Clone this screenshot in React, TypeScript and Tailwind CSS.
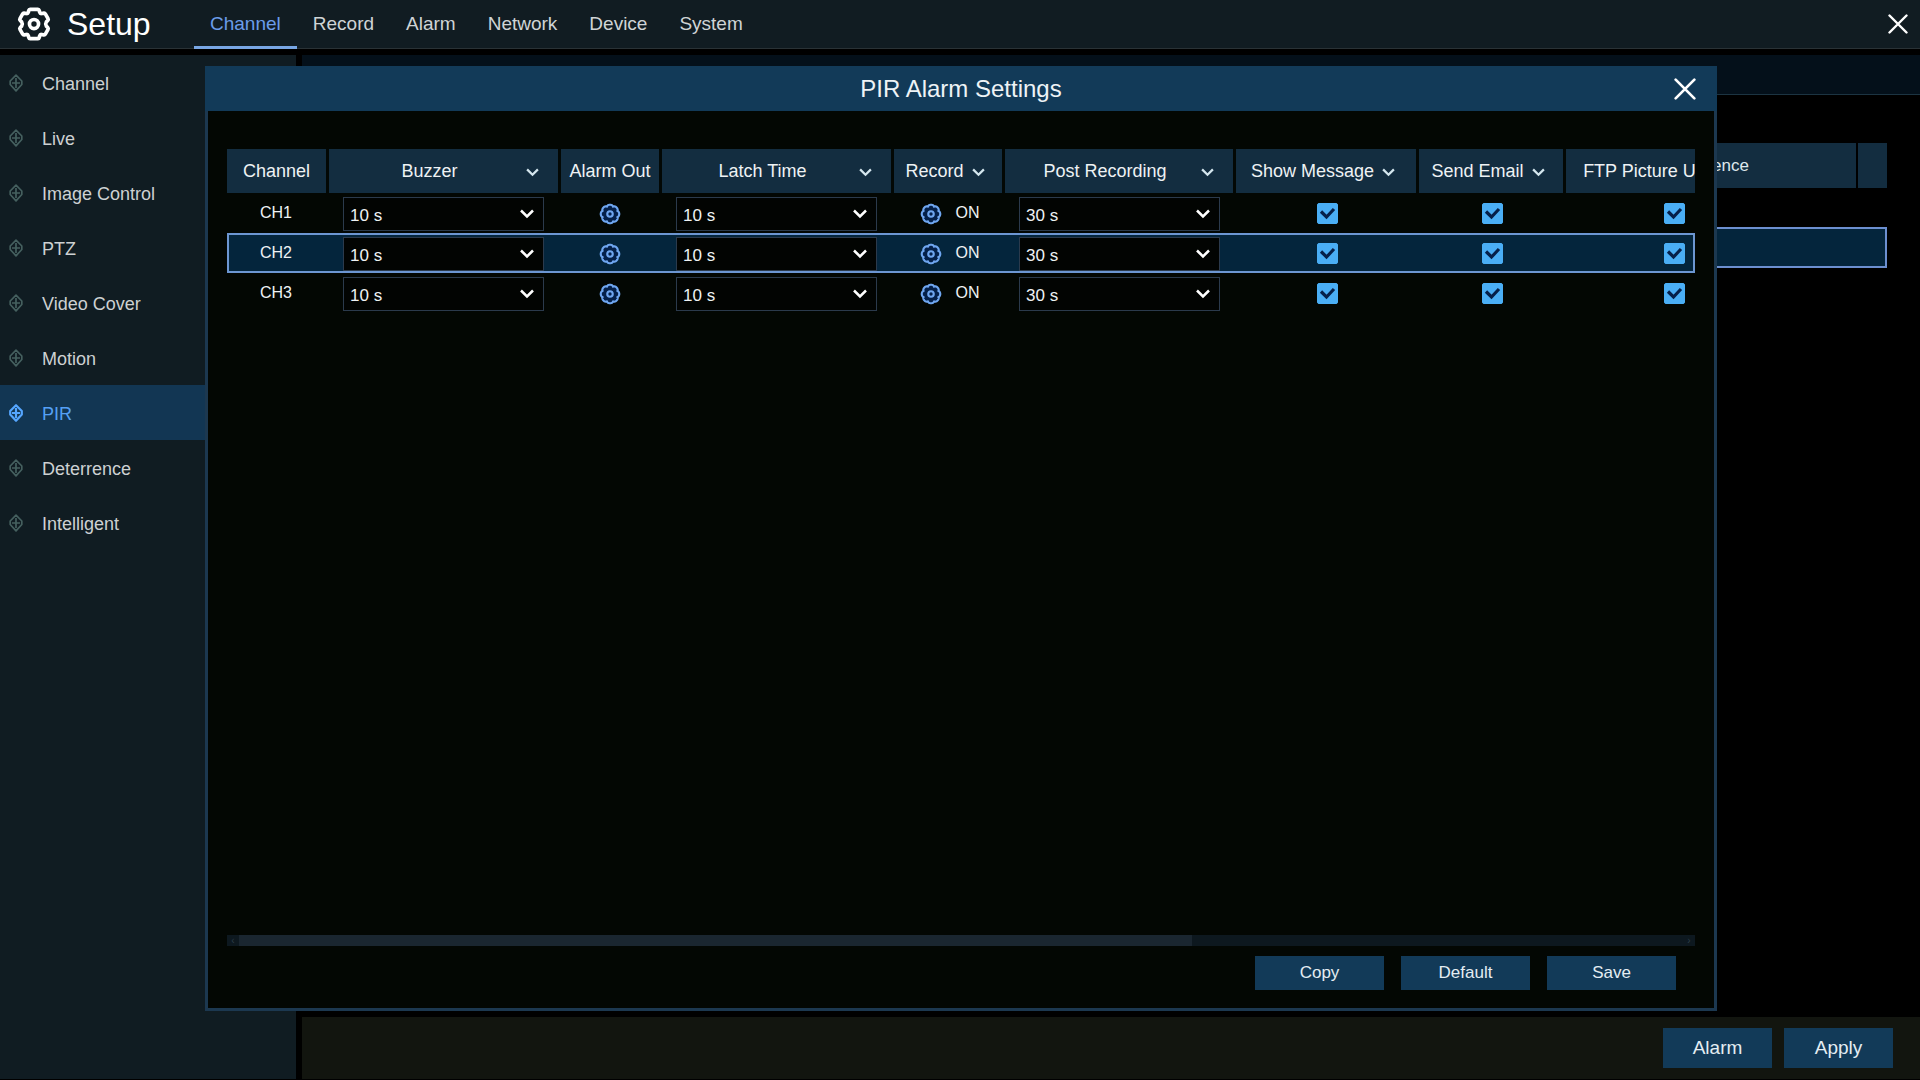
import { useState } from 'react';
import type { ReactNode } from 'react';

const TABS = ['Channel', 'Record', 'Alarm', 'Network', 'Device', 'System'];
const SIDE = ['Channel', 'Live', 'Image Control', 'PTZ', 'Video Cover', 'Motion', 'PIR', 'Deterrence', 'Intelligent'];
const CHANNELS = ['CH1', 'CH2', 'CH3'];

// Closed outline with rounded lobes and narrow notches between them.
function lobedPath(lobes: number, inner: number, depth: number) {
  const pts: string[] = [];
  for (let i = 0; i < 144; i++) {
    const a = (i / 144) * Math.PI * 2;
    const d = inner + depth * Math.sqrt(Math.abs(Math.cos((lobes / 2) * a)));
    pts.push((12 + d * Math.sin(a)).toFixed(2) + ' ' + (12 - d * Math.cos(a)).toFixed(2));
  }
  return 'M' + pts.join('L') + 'Z';
}

const GEAR_PATH = lobedPath(8, 8.6, 1.5);

function SetupIcon() {
  return (
    <svg viewBox="0 0 24 24" className="size-[34px]" fill="none" stroke="#fff" strokeWidth="2.6" strokeLinejoin="round" aria-hidden="true">
      <path d="M9.200 1.700h5.600q.7 0 .9.800l.3 1.200q.3 1 1.300.9l1.500-.3q.8-.2 1.200.5l1.900 3.400q.4.700-.2 1.300l-1 1q-.9 1.500 0 3l1 1q.6.600.2 1.300l-1.900 3.400q-.4.700-1.200.5l-1.500-.3q-1-.1-1.300.9l-.3 1.200q-.2.800-.9.800H9.200q-.7 0-.9-.8L8 20.300q-.3-1-1.300-.9l-1.500.3q-.8.2-1.200-.5l-1.900-3.400q-.4-.7.2-1.300l1-1q.9-1.500 0-3l-1-1q-.6-.6-.2-1.300L4 4.800q.4-.7 1.200-.5l1.500.3Q7.700 4.700 8 3.700l.3-1.200q.2-.8.900-.8z" />
      <circle cx="12" cy="12" r="3.2" />
    </svg>
  );
}

function Gear() {
  return (
    <svg viewBox="0 0 24 24" className="size-[22px]" fill="#04204a" stroke="#6fa6f0" strokeWidth="2.3" strokeLinejoin="round" aria-hidden="true">
      <path d={GEAR_PATH} />
      <circle cx="12" cy="12" r="3" />
    </svg>
  );
}

function Diamond({ active }: { active: boolean }) {
  return (
    <svg viewBox="0 0 14 18" className="h-[18px] w-[14px]" fill="none" stroke={active ? '#55a6ff' : '#45605f'} strokeWidth={active ? 2.2 : 1.7} strokeLinejoin="round" aria-hidden="true">
      <path d="M7 1.2 12.8 7v3.5L7 16.8 1.2 10.500V7z" />
      <path d="M7 4v10M3 9h8" />
    </svg>
  );
}

function Cross({ className }: { className: string }) {
  return (
    <svg viewBox="0 0 20 20" className={className} fill="none" stroke="#fff" strokeWidth="2.4" strokeLinecap="round" aria-hidden="true">
      <path d="M1.500 1.500l17 17M18.500 1.500l-17 17" />
    </svg>
  );
}

function Chevron({ className }: { className: string }) {
  return (
    <svg viewBox="0 0 14 10" className={className} fill="none" stroke="currentColor" strokeWidth="2.5" aria-hidden="true">
      <path d="M1 1.500l6 6 6-6" />
    </svg>
  );
}

function Picker({ label, value }: { label: string; value: string }) {
  return (
    <div className="relative mt-0.5 ml-3.5 h-[34px] w-[201px]">
      <select aria-label={label} defaultValue={value} className="h-full w-full appearance-none border border-[#2b3a4c] bg-[#020402] px-1.5 pt-1 text-[17px] text-[#eef2f4] outline-none">
        <option>{value}</option>
        <option>60 s</option>
      </select>
      <Chevron className="pointer-events-none absolute top-3 right-2.5 h-2.5 w-3.5 text-white" />
    </div>
  );
}

function Tick({ label }: { label: string }) {
  const [on, setOn] = useState(true);
  return (
    <label className="relative mx-auto block size-[21px]">
      <input type="checkbox" aria-label={label} checked={on} onChange={() => setOn(!on)} className="block size-full appearance-none rounded-xs border border-[#4aaef5] checked:bg-[#4aaef5]" />
      {on && (
        <svg viewBox="0 0 21 21" className="pointer-events-none absolute inset-0 size-full" fill="none" stroke="#06204a" strokeWidth="3.2" aria-hidden="true">
          <path d="M4 8.500l5.500 5.500 7.500-8" />
        </svg>
      )}
    </label>
  );
}

function Head({ label, menu }: { label: string; menu?: 'wide' | 'tight' }) {
  return (
    <th scope="col" className="h-11 border-r-[3px] border-[#030805] bg-[#132d40] bg-clip-padding p-0 font-normal whitespace-nowrap">
      {menu === 'wide' && (
        <button type="button" className="grid w-full grid-cols-[1fr_38px] items-center">
          <span className="pl-2.5">{label}</span>
          <Chevron className="mt-0.5 ml-1.5 h-[9px] w-[13px] text-[#d4e6ee]" />
        </button>
      )}
      {menu === 'tight' && (
        <button type="button" className="flex w-full items-center justify-center gap-2 pr-1.5">
          <span>{label}</span>
          <Chevron className="mt-0.5 h-[9px] w-[13px] text-[#d4e6ee]" />
        </button>
      )}
      {!menu && label}
    </th>
  );
}

function Action({ children, large }: { children: ReactNode; large?: boolean }) {
  return (
    <button type="button" className={large ? 'h-10 w-[109px] bg-[#123a58] text-[19px] text-[#e4edf2]' : 'h-[34px] w-[129px] bg-[#123a58] text-[17px] text-[#e4edf2]'}>
      {children}
    </button>
  );
}

function AlarmTable() {
  const [selected, setSelected] = useState('CH2');
  return (
    <table className="w-[1560px] table-fixed border-separate border-spacing-0 text-[#eef2f4]">
      <colgroup>
        <col className="w-[102px]" />
        <col className="w-[232px]" />
        <col className="w-[101px]" />
        <col className="w-[232px]" />
        <col className="w-[111px]" />
        <col className="w-[231px]" />
        <col className="w-[183px]" />
        <col className="w-[147px]" />
        <col className="w-[221px]" />
      </colgroup>
      <thead className="text-[18px]">
        <tr>
          <Head label="Channel" />
          <Head label="Buzzer" menu="wide" />
          <Head label="Alarm Out" />
          <Head label="Latch Time" menu="wide" />
          <Head label="Record" menu="tight" />
          <Head label="Post Recording" menu="wide" />
          <Head label="Show Message" menu="tight" />
          <Head label="Send Email" menu="tight" />
          <Head label="FTP Picture Upload" menu="tight" />
        </tr>
      </thead>
      <tbody>
        {CHANNELS.map((ch) => {
          const cell = selected === ch ? 'h-10 border-y-2 border-[#6c96d2] bg-[#04253c] p-0' : 'h-10 p-0';
          return (
            <tr key={ch} onClick={() => setSelected(ch)}>
              <td className={cell + ' pr-1 text-center text-base'}>{ch}</td>
              <td className={cell}><Picker label={ch + ' buzzer'} value="10 s" /></td>
              <td className={cell + ' pr-1'}>
                <button type="button" aria-label={ch + ' alarm out'} className="mx-auto mt-0.5 block"><Gear /></button>
              </td>
              <td className={cell}><Picker label={ch + ' latch time'} value="10 s" /></td>
              <td className={cell}>
                <div className="flex items-center justify-center gap-3.5">
                  <button type="button" aria-label={ch + ' record'} className="mt-0.5"><Gear /></button>
                  <span className="text-base">ON</span>
                </div>
              </td>
              <td className={cell}><Picker label={ch + ' post recording'} value="30 s" /></td>
              <td className={cell}><Tick label={ch + ' show message'} /></td>
              <td className={cell}><Tick label={ch + ' send email'} /></td>
              <td className={cell + ' pr-1'}><Tick label={ch + ' FTP picture upload'} /></td>
            </tr>
          );
        })}
      </tbody>
    </table>
  );
}

export default function App() {
  return (
    <div className="relative flex h-screen flex-col overflow-hidden bg-black pb-px font-['Liberation_Sans',Arial,sans-serif]">
      <header className="flex h-[49px] shrink-0 items-stretch border-b border-[#2a3236] bg-[#111c22]">
        <h1 className="flex w-[194px] items-center gap-4 pl-[17px] text-[32px] leading-none text-white">
          <SetupIcon />
          <span>Setup</span>
        </h1>
        <nav className="flex text-[19px] text-[#cfd4d6]">
          {TABS.map((t, i) => (
            <a key={t} href="#" className={i === 0 ? '-mb-px flex items-center border-b-[3px] border-[#78a6e4] px-4 pt-0.5 text-[#6b9cea]' : 'flex items-center px-4'}>
              {t}
            </a>
          ))}
        </nav>
        <button type="button" aria-label="Close setup" className="mr-3 ml-auto">
          <Cross className="size-5" />
        </button>
      </header>

      <div className="flex min-h-0 flex-1 gap-1.5 pt-1.5">
        <aside className="w-[296px] shrink-0 bg-[#101c22]">
          <nav className="flex flex-col text-[18px] text-[#cdd1d2]">
            {SIDE.map((s) => {
              const active = s === 'PIR';
              return (
                <a key={s} href="#" className={active ? 'flex h-[55px] items-center gap-[19px] bg-[#123653] pl-[9px] text-[#55a0f5]' : 'flex h-[55px] items-center gap-[19px] pl-[9px]'}>
                  <Diamond active={active} />
                  <span className="pt-1">{s}</span>
                </a>
              );
            })}
          </nav>
        </aside>

        <div className="flex min-w-0 flex-1 flex-col">
          <div className="h-10 border-b border-[#1c3442] bg-[#04101a]" />
          <main className="min-h-0 flex-1 pt-12 pr-[33px] pl-5 text-[17px] text-[#dfe8ec]">
            <div className="flex h-[45px] gap-0.5">
              <div className="flex flex-1 items-center justify-end bg-[#132d40] pr-[107px]">Deterrence</div>
              <div className="w-[29px] bg-[#132d40]" />
            </div>
            <div className="mt-[39px] h-[41px] border-2 border-[#6c8fd0] bg-[#04253c]" />
          </main>
          <footer className="flex h-[62px] shrink-0 items-center justify-end gap-3 bg-[#12150f] pr-[27px]">
            <Action large>Alarm</Action>
            <Action large>Apply</Action>
          </footer>
        </div>
      </div>

      <section role="dialog" aria-label="PIR Alarm Settings" className="absolute top-[66px] right-[203px] bottom-[69px] left-[205px] flex flex-col border-[3px] border-t-0 border-[#1c3850] bg-[#030703]">
        <div className="relative -mx-[3px] flex h-[45px] shrink-0 items-center justify-center bg-[#123a58]">
          <h2 className="text-2xl text-[#eef3f6]">PIR Alarm Settings</h2>
          <button type="button" aria-label="Close dialog" className="absolute top-3 right-[21px]">
            <Cross className="size-[22px]" />
          </button>
        </div>
        <div className="flex min-h-0 flex-1 flex-col px-[19px] pt-[38px] pb-[18px]">
          <div className="relative min-h-0 flex-1 overflow-hidden">
            <AlarmTable />
            <div className="pointer-events-none absolute inset-x-0 top-[84px] h-10 border-x-2 border-[#6c96d2]" />
          </div>
          <div className="flex h-[11px] items-center bg-[#0d181f]">
            <span className="w-3 text-center text-[10px] leading-none text-[#2c3c46]">‹</span>
            <div className="h-full flex-1">
              <div className="h-full w-[66%] bg-[#1a2630]" />
            </div>
            <span className="w-3 text-center text-[10px] leading-none text-[#2c3c46]">›</span>
          </div>
          <div className="mt-2.5 flex justify-end gap-[17px] pr-[19px]">
            <Action>Copy</Action>
            <Action>Default</Action>
            <Action>Save</Action>
          </div>
        </div>
      </section>
    </div>
  );
}
